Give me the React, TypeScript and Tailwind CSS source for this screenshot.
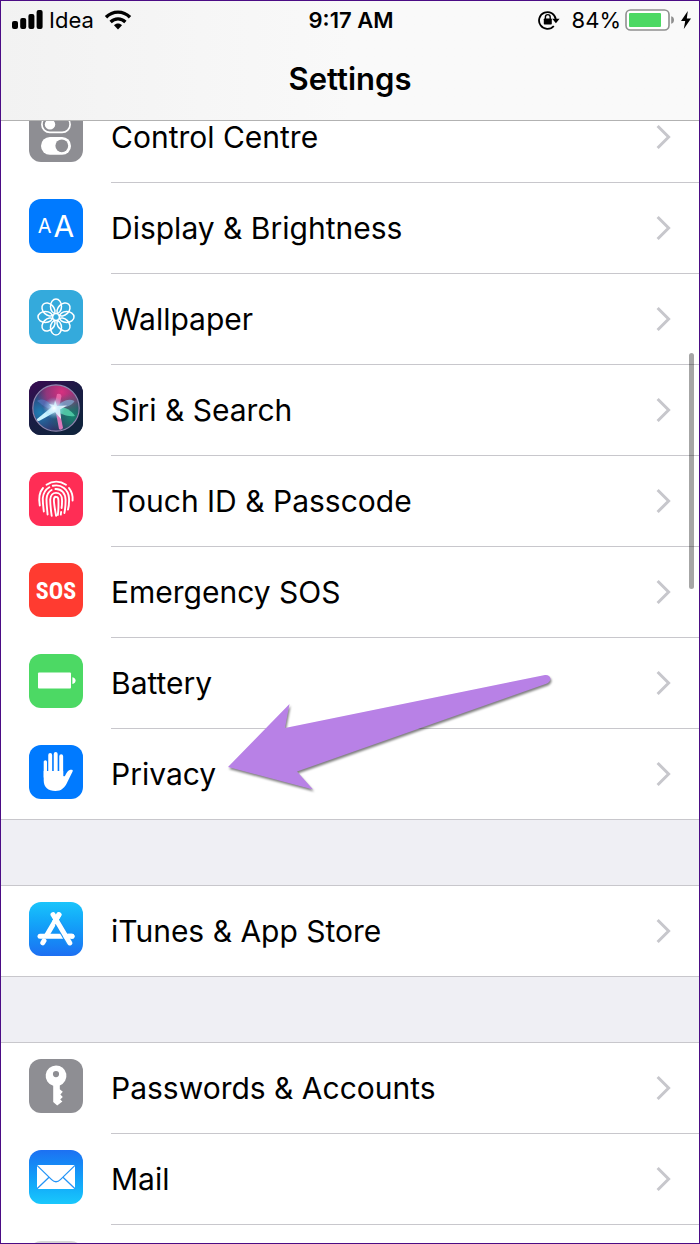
import type { ReactNode } from "react";

function ControlCentreIcon() {
  return (
    <svg viewBox="0 0 54 54" className="size-full">
      <rect x="12.9" y="8.4" width="28.2" height="16" rx="8" fill="none" stroke="#fff" strokeWidth="1.7" />
      <circle cx="21" cy="16.4" r="5.2" fill="#fff" />
      <rect x="12" y="29" width="30" height="17.8" rx="8.9" fill="#fff" />
      <circle cx="32.8" cy="37.8" r="6.4" fill="#8e8e93" />
    </svg>
  );
}

function WallpaperIcon() {
  return (
    <svg viewBox="0 0 54 54" className="size-full" fill="none" stroke="#fff" strokeWidth="1.5">
      {[0, 45, 90, 135, 180, 225, 270, 315].map((angle) => (
        <ellipse key={angle} transform={`rotate(${angle} 27 27)`} cx="27" cy="16.4" rx="5.5" ry="7.4" />
      ))}
    </svg>
  );
}

function SiriIcon() {
  return (
    <svg viewBox="0 0 54 54" className="size-full">
      <defs>
        <linearGradient id="siri-bg" x1="0" y1="0" x2="0.6" y2="1">
          <stop offset="0" stopColor="#3a0a52" />
          <stop offset="0.5" stopColor="#1b1c45" />
          <stop offset="1" stopColor="#10233c" />
        </linearGradient>
        <radialGradient id="siri-pink" cx="0.62" cy="0.15" r="0.55">
          <stop offset="0" stopColor="#d8307f" />
          <stop offset="0.6" stopColor="#a8367f" stopOpacity="0.8" />
          <stop offset="1" stopColor="#a8367f" stopOpacity="0" />
        </radialGradient>
        <radialGradient id="siri-blue" cx="0.15" cy="0.6" r="0.55">
          <stop offset="0" stopColor="#1f7fb5" />
          <stop offset="1" stopColor="#1f7fb5" stopOpacity="0" />
        </radialGradient>
        <radialGradient id="siri-green" cx="0.85" cy="0.68" r="0.5">
          <stop offset="0" stopColor="#16866e" />
          <stop offset="1" stopColor="#16866e" stopOpacity="0" />
        </radialGradient>
        <radialGradient id="siri-core" cx="0.46" cy="0.5" r="0.24">
          <stop offset="0" stopColor="#fff" />
          <stop offset="0.35" stopColor="#c3ecff" stopOpacity="0.7" />
          <stop offset="1" stopColor="#70c8f0" stopOpacity="0" />
        </radialGradient>
      </defs>
      <rect width="54" height="54" fill="url(#siri-bg)" />
      <circle cx="27" cy="27" r="23" fill="#33285f" />
      <circle cx="27" cy="27" r="23" fill="url(#siri-blue)" />
      <circle cx="27" cy="27" r="23" fill="url(#siri-pink)" />
      <circle cx="27" cy="27" r="23" fill="url(#siri-green)" />
      <path d="M25 28C20 20 14 16 8 20C12 22 17 29 25 28Z" fill="#5579c8" opacity="0.6" />
      <path d="M25 27L28 13Q32 12 32.5 15L30 27Z" fill="#f06fae" opacity="0.85" />
      <path d="M27 27C33 19 40 17 45.5 20C43 25 35 27 27 28Z" fill="#80a5cf" opacity="0.75" />
      <path d="M27 26C35 25 42 29 46 35C38 36 32 33 27 30Z" fill="#55d2ac" opacity="0.85" />
      <path d="M26 27H30L34 47Q32 50 30 48Z" fill="#e77bc0" opacity="0.95" />
      <path d="M24 25L8 38Q7 41 11 39.5L28 30Z" fill="#c9f3ff" />
      <path d="M26 19L28 25L38 24.5L31 28.5L32 38L26 31L19 32L23 26L20 23L25 24Z" fill="#fff" opacity="0.9" />
      <circle cx="27" cy="27" r="23" fill="url(#siri-core)" />
      <circle cx="27" cy="27" r="23.2" fill="none" stroke="#8f86ae" strokeWidth="1.2" />
    </svg>
  );
}

function FingerprintIcon() {
  return (
    <svg viewBox="0 0 54 54" className="size-full" fill="none" stroke="#fff" strokeWidth="1.9" strokeLinecap="round">
      <path d="M17.5 12.8C23.5 8.8 31 8.8 37 12.8" />
      <path d="M14 16C10.5 20 9.4 25.5 10.8 33.5" />
      <path d="M40 16C43 20 44 24.5 43.6 28.5" />
      <path d="M14.8 39.5C14.2 34 13.6 30 13.8 26C14.2 21.5 16.5 17.5 20.3 15.2" />
      <path d="M23.8 13.8C32.5 11.8 39.4 17.5 40 26C40.2 30 40 34 39 37.6" />
      <path d="M18.6 42.5C18 36 17.4 31 17.5 27C17.8 22.6 19.6 19.6 22.6 18" />
      <path d="M26.4 17C32.4 16.6 36.6 21.6 36.6 28C36.6 32.5 36.4 36.5 35.4 41" />
      <path d="M22.7 43.9C21.8 37.5 21.2 32 21.2 27.6C21.4 23.4 24 20.9 27 20.9C30.5 20.9 33 23.8 33 27.8C33.1 31 33 33.5 32.6 36" />
      <path d="M32.1 40L31.8 42.6" />
      <path d="M27.1 43.9C26 37.5 24.8 31.5 24.9 27.8C25 23.8 29.3 23.8 29.4 28C29.6 34 29.4 39 28.8 43" />
    </svg>
  );
}

function BatteryIcon() {
  return (
    <svg viewBox="0 0 54 54" className="size-full" fill="#fff">
      <rect x="9" y="18.6" width="33" height="16" rx="1" />
      <path d="M43.4 23.2Q46.6 24 46.6 26.6T43.4 30Z" />
    </svg>
  );
}

function HandIcon() {
  return (
    <svg viewBox="0 0 54 54" className="size-full" fill="#fff" stroke="#fff" strokeLinecap="round">
      <path
        stroke="none"
        d="M14.7 26H34.2V30C34.2 31.6 35.4 31.8 36.2 30.4C37.6 27.6 39 25.4 41.2 24.8C43 24.3 44.4 25 43.6 26.4L38.4 37C36 42.6 32.4 46 26.4 46C19.2 46 14.7 42 14.7 35.5Z"
      />
      <path fill="none" strokeWidth="3.3" d="M16.35 16.8V32" />
      <path fill="none" strokeWidth="3.9" d="M21.2 10V32M26.7 9V32M32.2 11.2V30" />
    </svg>
  );
}

function AppStoreIcon() {
  return (
    <svg viewBox="0 0 54 54" className="size-full" fill="none" stroke="#fff" strokeWidth="5" strokeLinecap="round">
      <path d="M11 34.2H43" />
      <path d="M29.8 12.8L17.6 33.6M15 38.8L13.8 40.8" />
      <path d="M28.6 20.4L40.8 41.2" stroke="#1d94f5" strokeWidth="7" strokeLinecap="butt" />
      <path d="M30 12.6L25.5 20" />
      <path d="M24 12.6L40.8 41" />
      <path d="M37 34.2H43" />
    </svg>
  );
}

function KeyIcon() {
  return (
    <svg viewBox="0 0 54 54" className="size-full">
      <path
        fill="#fff"
        fillRule="evenodd"
        d="M27 6.4A10.4 10.4 0 0 1 30.8 26.5V30.2L33.8 32.8L31.4 35.4L33.8 38L31.2 40.4L33.4 42.6L28.2 46.6L24.2 43V26.8A10.4 10.4 0 0 1 27 6.4ZM27 12A3.1 3.1 0 1 0 27 18.2A3.1 3.1 0 1 0 27 12Z"
      />
    </svg>
  );
}

function MailIcon() {
  return (
    <svg viewBox="0 0 54 54" className="size-full">
      <rect x="8" y="15" width="38" height="24" rx="0.8" fill="#fff" />
      <g fill="none" stroke="#2695f6" strokeWidth="1.3">
        <path d="M8 15.4L22.6 29.6Q27 33.8 31.4 29.6L46 15.4" />
        <path d="M8 38.8L20 27.2M46 38.8L34 27.2" />
      </g>
    </svg>
  );
}

function Chevron() {
  return (
    <svg viewBox="0 0 15 26" className="h-[26px] w-[15px] shrink-0" fill="none" stroke="#c7c7cc" strokeWidth="3">
      <path d="M1.6 2L12.6 13L1.6 24" />
    </svg>
  );
}

type Item = { label: string; tile: string; icon?: ReactNode };

const groups: Item[][] = [
  [
    { label: "Control Centre", tile: "bg-[#8e8e93]", icon: <ControlCentreIcon /> },
    {
      label: "Display & Brightness",
      tile: "bg-[#007aff]",
      icon: (
        <span aria-hidden="true" className="flex size-full items-center justify-center gap-0.5 text-white">
          <span className="text-[20px] leading-none">A</span>
          <span className="text-[30px] leading-none">A</span>
        </span>
      ),
    },
    { label: "Wallpaper", tile: "bg-[#34aadc]", icon: <WallpaperIcon /> },
    { label: "Siri & Search", tile: "bg-[#1b1c45]", icon: <SiriIcon /> },
    { label: "Touch ID & Passcode", tile: "bg-[#ff2d55]", icon: <FingerprintIcon /> },
    {
      label: "Emergency SOS",
      tile: "bg-[#ff3b30]",
      icon: (
        <span
          aria-hidden="true"
          className="flex size-full items-center justify-center pt-0.5 font-['Liberation_Sans_Narrow','Roboto_Condensed',Roboto,sans-serif] text-2xl leading-none font-bold text-white"
        >
          SOS
        </span>
      ),
    },
    { label: "Battery", tile: "bg-[#4cd964]", icon: <BatteryIcon /> },
    { label: "Privacy", tile: "bg-[#007aff]", icon: <HandIcon /> },
  ],
  [{ label: "iTunes & App Store", tile: "bg-linear-to-b from-[#1bc4fb] to-[#1d6ff2]", icon: <AppStoreIcon /> }],
  [
    { label: "Passwords & Accounts", tile: "bg-[#8e8e93]", icon: <KeyIcon /> },
    { label: "Mail", tile: "bg-linear-to-b from-[#1d70f2] to-[#1ac8fc]", icon: <MailIcon /> },
    { label: "", tile: "bg-[#d5d5d5]" },
  ],
];

function Row({ item }: { item: Item }) {
  return (
    <li className="group">
      <a href="#" className="flex gap-7 pl-7">
        <span className={`mt-4 size-[54px] shrink-0 overflow-hidden rounded-xl ${item.tile}`}>{item.icon}</span>
        <span className="flex flex-1 items-center justify-between border-b border-[#c8c7cc] pr-7 group-last:border-b-0">
          <span className="flex h-[90px] items-center text-[30px] leading-9">{item.label}</span>
          <Chevron />
        </span>
      </a>
    </li>
  );
}

function StatusBar() {
  return (
    <div className="grid grid-cols-[1fr_auto_1fr] items-center pt-1 pr-2 pl-[10px] text-[22px] leading-[30px]">
      <div className="flex items-center gap-1.5">
        <svg viewBox="0 0 32 20" className="h-5 w-8">
          <rect x="1" y="11" width="6" height="8" rx="2" />
          <rect x="9.2" y="8" width="6" height="11" rx="2" />
          <rect x="17.4" y="4" width="6" height="15" rx="2" />
          <rect x="25.6" y="0" width="6" height="19" rx="2" />
        </svg>
        <span>Idea</span>
        <svg viewBox="0 0 28 20" className="ml-1 h-5 w-7" fill="none" stroke="#000">
          <path d="M2 7.2C8.8 0.4 19.2 0.4 26 7.2" strokeWidth="3.4" />
          <path d="M6.6 12C10.8 7.8 17.2 7.8 21.4 12" strokeWidth="3.2" />
          <path d="M10 15.2C12.2 13 15.8 13 18 15.2L14 19.4Z" fill="#000" stroke="none" />
        </svg>
      </div>
      <div className="text-center font-semibold">9:17 AM</div>
      <div className="flex items-center justify-end">
        <svg viewBox="0 0 22 20" className="mr-3 h-5 w-[22px]">
          <path d="M15.8 16A8.4 8.4 0 1 1 17.8 9.5" fill="none" stroke="#000" strokeWidth="1.8" />
          <path d="M14.2 8.8H21.6L17.9 13.2Z" />
          <rect x="5.8" y="8.4" width="8" height="6.2" rx="0.8" />
          <path d="M7.4 9V7A2.4 2.4 0 0 1 12.2 7V9" fill="none" stroke="#000" strokeWidth="1.4" />
        </svg>
        <span>84%</span>
        <svg viewBox="0 0 50 22" className="ml-1 h-[22px] w-[50px]">
          <rect x="1" y="1" width="43" height="20" rx="4.5" fill="#fff" stroke="#8f8f8f" strokeWidth="1.6" />
          <rect x="4" y="4" width="32" height="14" rx="1" fill="#4cd964" />
          <path d="M46.2 7.2Q49 8 49 11T46.2 14.8Z" fill="#8f8f8f" />
        </svg>
        <svg viewBox="0 0 10 18" className="ml-1.5 h-[18px] w-2.5">
          <path d="M6.8 0L0 10H4.2L2.8 18L10 7.4H5.8Z" />
        </svg>
      </div>
    </div>
  );
}

export default function App() {
  return (
    <div className="relative flex h-screen flex-col overflow-hidden border border-[#4b0c85] bg-[#efeff4] font-[Inter,'Liberation_Sans',sans-serif] text-black">
      <header className="z-10 h-[120px] shrink-0 border-b border-[#b2b2b2] bg-linear-to-r from-[#f2f2f2] to-[#f9f9f9] to-50%">
        <StatusBar />
        <h1 className="mt-6 text-center text-[31px] leading-10 font-semibold">Settings</h1>
      </header>

      <main className="-mt-[29px] flex flex-col gap-[65px]">
        {groups.map((items, index) => (
          <ul
            key={index}
            className="border-y border-[#c8c7cc] bg-white first:border-t-0"
          >
            {items.map((item) => (
              <Row key={item.label} item={item} />
            ))}
          </ul>
        ))}
      </main>

      <div className="absolute top-[352px] right-[5px] h-[236px] w-[5px] rounded-full bg-black/35" />

      <svg
        viewBox="220 660 350 150"
        className="pointer-events-none absolute top-[659px] left-[218px] h-[150px] w-[350px] drop-shadow-[1px_2px_1px_rgba(0,0,0,0.5)]"
      >
        <path
          fill="#b881e6"
          d="M229 767L290.5 704L286 728L546 675Q550.5 674.5 551.5 678.5Q551.5 681.5 548 683.5L298 771.5L314 789.5Z"
        />
      </svg>
    </div>
  );
}
